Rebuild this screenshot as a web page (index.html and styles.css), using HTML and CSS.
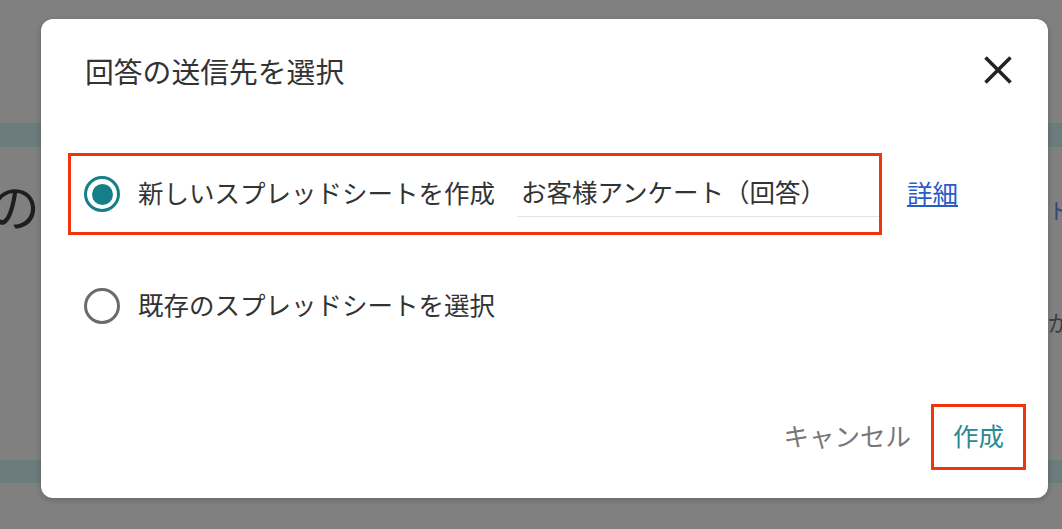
FILE: index.html
```html
<!DOCTYPE html>
<html lang="ja">
<head>
    <meta charset="UTF-8">
    <meta name="viewport" content="width=device-width, initial-scale=1.0">
    <title>回答の送信先を選択</title>
    <link rel="stylesheet" href="styles.css">
</head>
<body>
    <div class="page">
        <div class="page-band"></div>
        <div class="page-row">
            <span class="page-heading">の</span>
            <div class="page-side">
                <span class="page-side-link">ト：</span>
                <span class="page-side-text">が作</span>
            </div>
        </div>
        <div class="page-band page-band-bottom"></div>
    </div>

    <div class="scrim">
        <div class="dialog">
            <div class="dialog-head">
                <h2 class="dialog-title">回答の送信先を選択</h2>
                <button class="close-button" aria-label="閉じる">
                    <svg width="28" height="28" viewBox="0 0 28 28">
                        <line x1="1.5" y1="1.5" x2="26.5" y2="26.5" stroke="#222" stroke-width="3.6"/>
                        <line x1="26.5" y1="1.5" x2="1.5" y2="26.5" stroke="#222" stroke-width="3.6"/>
                    </svg>
                </button>
            </div>

            <div class="options">
                <div class="option-line">
                    <label class="option option-new highlight">
                        <span class="radio checked"></span>
                        <span class="option-label">新しいスプレッドシートを作成</span>
                        <input class="sheet-name" type="text" value="お客様アンケート（回答）">
                    </label>
                    <a href="#" class="details-link">詳細</a>
                </div>
                <label class="option">
                    <span class="radio"></span>
                    <span class="option-label">既存のスプレッドシートを選択</span>
                </label>
            </div>

            <div class="dialog-actions">
                <button class="action-button">キャンセル</button>
                <button class="action-button primary highlight">作成</button>
            </div>
        </div>
    </div>
</body>
</html>
```

FILE: styles.css
```css
* {
    box-sizing: border-box;
}

html, body {
    margin: 0;
    padding: 0;
}

body {
    font-family: "Noto Sans CJK JP", "Noto Sans", sans-serif;
    background: #808080;
    width: 1062px;
    height: 529px;
    overflow: hidden;
    position: relative;
}

/* dimmed page behind the dialog */
.page {
    display: flex;
    flex-direction: column;
    height: 529px;
}

.page-band {
    height: 24px;
    margin-top: 123px;
    background: #6c7b7b;
}

.page-row {
    display: flex;
    justify-content: space-between;
    height: 313px;
}

.page-heading {
    font-size: 52px;
    line-height: 52px;
    margin: 32px 0 0 -12px;
    color: #1e1e1e;
}

.page-side {
    display: flex;
    flex-direction: column;
    width: 44px;
    margin-right: -30px;
    font-size: 22px;
    line-height: 28px;
}

.page-side-link {
    margin-top: 48px;
    color: #35477a;
}

.page-side-text {
    margin-top: 84px;
    color: #3d3d3d;
}

.page-band-bottom {
    margin-top: 0;
    height: 23px;
}

/* modal */
.scrim {
    position: absolute;
    top: 0;
    left: 0;
    right: 0;
    bottom: 0;
    padding: 19px 0 0 41px;
}

.dialog {
    width: 1007px;
    height: 479px;
    background: #ffffff;
    border-radius: 12px;
    box-shadow: 0 2px 6px rgba(0, 0, 0, 0.2);
    padding-top: 33px;
    display: flex;
    flex-direction: column;
}

.dialog-head {
    display: flex;
    align-items: center;
    justify-content: space-between;
    height: 40px;
    padding: 0 30px 0 44px;
}

.dialog-title {
    margin: 0;
    padding-bottom: 2px;
    font-size: 28.8px;
    font-weight: 400;
    line-height: 36px;
    color: #333;
}

.close-button {
    width: 40px;
    height: 40px;
    margin-top: -4px;
    padding: 0;
    border: none;
    background: none;
    display: flex;
    align-items: center;
    justify-content: center;
    cursor: pointer;
}

.options {
    margin-top: 61px;
    padding-left: 27px;
    display: flex;
    flex-direction: column;
    gap: 30px;
}

.option-line {
    display: flex;
    align-items: center;
    gap: 25px;
}

.option {
    display: flex;
    align-items: center;
    height: 82px;
    padding-left: 13px;
    border: 3px solid transparent;
    font-size: 25.5px;
    color: #333;
}

.option-new {
    width: 814px;
}

.highlight {
    border: 3px solid #ee3511;
}

.radio {
    flex-shrink: 0;
    width: 36px;
    height: 36px;
    border-radius: 50%;
    border: 3.5px solid #6b6b6b;
    display: flex;
    align-items: center;
    justify-content: center;
}

.radio.checked {
    border-color: #157f87;
}

.radio.checked::after {
    content: "";
    width: 21px;
    height: 21px;
    border-radius: 50%;
    background: #157f87;
}

.option-label {
    margin-left: 18px;
    padding-bottom: 6px;
    white-space: nowrap;
}

.sheet-name {
    flex: 1;
    min-width: 0;
    height: 46px;
    margin-left: 22px;
    padding: 0 4px 6px;
    border: none;
    border-bottom: 1px solid #e4e4e4;
    background: transparent;
    font: inherit;
    color: #333;
    outline: none;
}

.details-link {
    padding-bottom: 6px;
    font-size: 25.5px;
    color: #2a5bc7;
    text-decoration: underline;
}

.dialog-actions {
    margin-top: 57px;
    padding-right: 22px;
    display: flex;
    justify-content: flex-end;
}

.action-button {
    height: 66px;
    padding: 0 20px 6px;
    border: none;
    background: none;
    font-family: inherit;
    font-size: 25.5px;
    color: #777;
    cursor: pointer;
}

.action-button.primary {
    padding: 0 19px 6px;
    color: #2a8a94;
    border: 3px solid #ee3511;
}
```
